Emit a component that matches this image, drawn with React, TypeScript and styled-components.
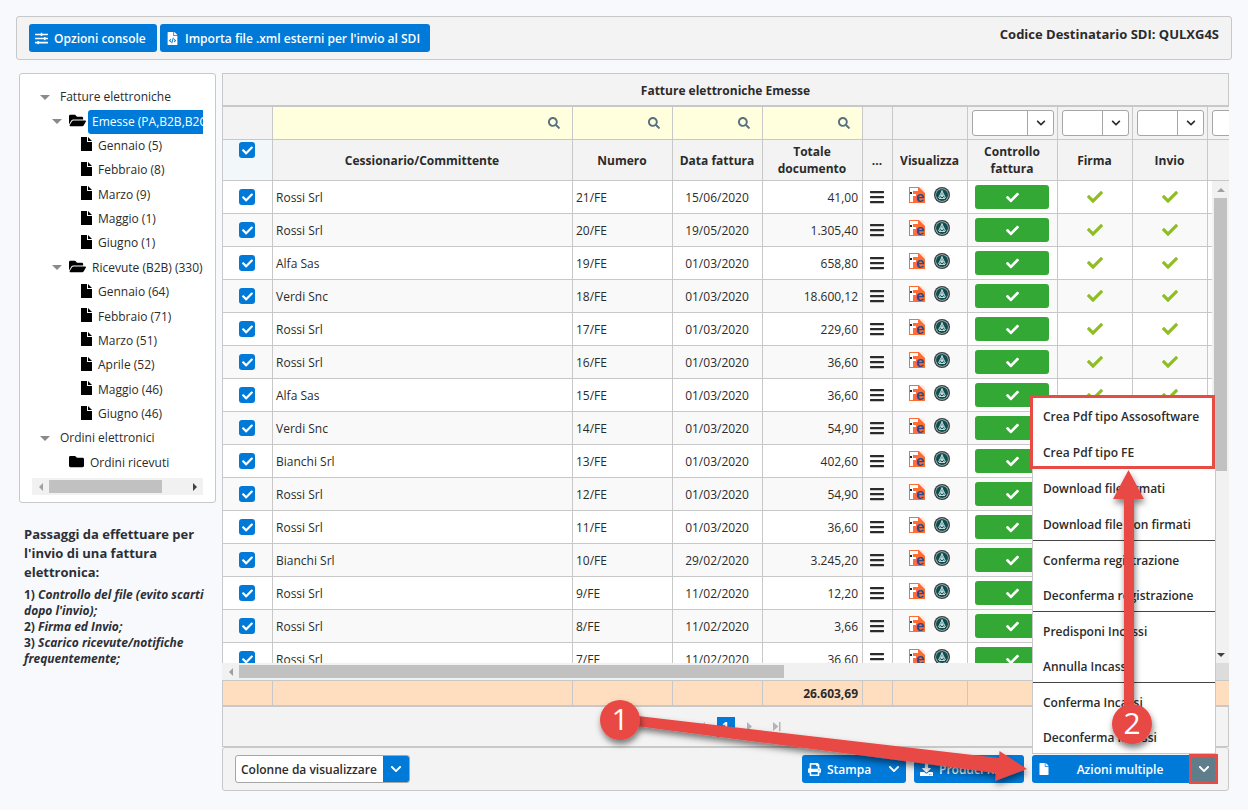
import React from "react";
import styled, { createGlobalStyle, css } from "styled-components";
import {
  FaBars,
  FaCheck,
  FaChevronDown,
  FaDownload,
  FaFile,
  FaFileCode,
  FaFolder,
  FaFolderOpen,
  FaPrint,
  FaSearch,
  FaSlidersH,
} from "react-icons/fa";

const color = {
  page: "#f8f9fc",
  panel: "#f3f3f3",
  line: "#c8c8c8",
  text: "#2b2b2b",
  blue: "#007ad9",
  green: "#34a835",
  lime: "#8fbe22",
  filter: "#ffffdd",
  total: "#ffdec0",
  red: "#e84a44",
  track: "#f1f1f1",
  thumb: "#c1c1c1",
};

const Global = createGlobalStyle`
  *, *::before, *::after { box-sizing: border-box; }
  body {
    margin: 0;
    background: ${color.page};
    color: ${color.text};
    font-family: "Open Sans", "Noto Sans", sans-serif;
    font-size: 12px;
  }
  button, input, select { font: inherit; color: inherit; margin: 0; }
  svg { display: block; flex: none; }
`;

/* ---------- page frame ---------- */

const Page = styled.div`
  position: relative;
  padding: 16px 16px 19px;
  overflow: hidden;
`;

const TopBar = styled.header`
  display: flex;
  align-items: flex-start;
  justify-content: space-between;
  padding: 7px 12px;
  border: 1px solid ${color.line};
  border-radius: 3px;
  background: ${color.panel};
`;

const ButtonRow = styled.div<{ $gap: number }>`
  display: flex;
  gap: ${(p) => p.$gap}px;
`;

const BlueButton = styled.button<{ $width?: number; $iconGap?: number; $flatRight?: boolean }>`
  display: flex;
  align-items: center;
  gap: ${(p) => p.$iconGap ?? 6}px;
  height: 28px;
  width: ${(p) => (p.$width ? `${p.$width}px` : "auto")};
  padding: 0 6px;
  border: 0;
  border-radius: ${(p) => (p.$flatRight ? "3px 0 0 3px" : "3px")};
  background: ${color.blue};
  color: #fff;
  font-weight: 600;
  white-space: nowrap;
`;

const ButtonText = styled.span<{ $center?: boolean }>`
  ${(p) => p.$center && css`flex: 1; text-align: center;`}
`;

const Recipient = styled.div`
  font-size: 13px;
  font-weight: 700;
  line-height: 20px;
`;

const Main = styled.main`
  display: grid;
  grid-template-columns: 197px minmax(0, 1fr);
  gap: 6px;
  margin: 13px 3px 0;
`;

/* ---------- tree ---------- */

const TreePanel = styled.nav`
  padding: 11px 12px 7px;
  border: 1px solid ${color.line};
  border-radius: 3px;
  background: #fff;
`;

const Tree = styled.ul`
  display: flex;
  flex-direction: column;
  height: 390px;
  margin: 0 0 3px;
  padding: 0;
  list-style: none;
  overflow: hidden;
`;

const TreeNode = styled.li<{ $indent: number; $gap: number }>`
  display: flex;
  flex: 1;
  align-items: center;
  gap: ${(p) => p.$gap}px;
  padding-left: ${(p) => p.$indent}px;
  font-size: 12px;
  line-height: 24px;
  white-space: nowrap;
`;

const Caret = styled.span`
  border: 5px solid transparent;
  border-top-color: #8a8a8a;
  border-bottom-width: 0;
`;

const NodeIcon = styled.span`
  display: flex;
  padding-bottom: 3px;
  color: #000;
`;

const NodeLabel = styled.a<{ $selected?: boolean; $folder?: boolean }>`
  color: inherit;
  text-decoration: none;
  ${(p) => p.$folder && css`margin-left: -5px; padding: 0 4px;`}
  ${(p) => p.$selected && css`border-radius: 3px; background: ${color.blue}; color: #fff;`}
`;

const ScrollX = styled.div`
  display: flex;
  align-items: center;
  flex: 1;
  height: 17px;
  background: ${color.track};
`;

const ScrollY = styled.div`
  display: flex;
  flex-direction: column;
  align-items: center;
  width: 17px;
  background: ${color.track};
`;

const ScrollCap = styled.span`
  display: flex;
  flex: none;
  align-items: center;
  justify-content: center;
  width: 17px;
  height: 17px;
`;

const ThumbX = styled.span<{ $share: number }>`
  flex: ${(p) => p.$share} 1 0;
  height: 13px;
  background: ${color.thumb};
`;

const ThumbY = styled.span<{ $share: number }>`
  flex: ${(p) => p.$share} 1 0;
  width: 13px;
  background: ${color.thumb};
`;

const ScrollRest = styled.span<{ $share: number }>`
  flex: ${(p) => p.$share} 1 0;
`;

/* ---------- notes ---------- */

const Notes = styled.section`
  padding: 22px 0 0 5px;
  font-weight: 700;
  color: #2c3036;
`;

const NotesTitle = styled.h2`
  margin: 0 0 5px;
  font-size: 13px;
  line-height: 19px;
`;

const Note = styled.p`
  margin: 0;
  font-size: 12px;
  line-height: 16px;
`;

/* ---------- grid ---------- */

const TableTitle = styled.h1`
  margin: 0;
  height: 34px;
  border: 1px solid ${color.line};
  border-bottom-width: 2px;
  background: ${color.panel};
  font-size: 12px;
  line-height: 34px;
  text-align: center;
`;

const Clip = styled.div`
  flex: 1;
  min-width: 0;
  overflow: hidden;
  border-left: 1px solid ${color.line};
`;

const BodyArea = styled.div`
  display: flex;
  height: 482px;
`;

const ScrollLine = styled.div`
  display: flex;
`;

const Corner = styled.div`
  width: 17px;
  height: 17px;
  background: #dcdcdc;
`;

const GridTable = styled.table`
  width: 1065px;
  table-layout: fixed;
  border-collapse: separate;
  border-spacing: 0;
`;

const cell = css`
  padding: 0 4px 0 3px;
  border-right: 1px solid ${color.line};
  border-bottom: 1px solid ${color.line};
`;

const FilterCell = styled.td<{ $editable?: boolean }>`
  ${cell}
  height: 33px;
  padding: 0 3px 0 4px;
  background: ${(p) => (p.$editable ? color.filter : color.panel)};
`;

const HeadCell = styled.th<{ $check?: boolean }>`
  ${cell}
  height: 41px;
  background: ${(p) => (p.$check ? "#f2f7f9" : color.panel)};
  vertical-align: ${(p) => (p.$check ? "top" : "middle")};
  padding-top: ${(p) => (p.$check ? 2 : 0)}px;
  font-weight: 700;
  line-height: 17px;
`;

const BodyRow = styled.tr`
  background: #fff;
  &:nth-child(even) { background: #f9f9f9; }
`;

const BodyCell = styled.td<{ $align?: "left" | "center" | "right" }>`
  ${cell}
  height: 33px;
  text-align: ${(p) => p.$align ?? "left"};
`;

const TotalCell = styled.td`
  ${cell}
  height: 25px;
  border-top: 1px solid ${color.line};
  border-bottom: 0;
  background: ${color.total};
  font-weight: 700;
  text-align: right;
`;

const Centered = styled.div<{ $gap?: number; $lift?: boolean }>`
  display: flex;
  align-items: center;
  justify-content: center;
  gap: ${(p) => p.$gap ?? 0}px;
  padding-bottom: ${(p) => (p.$lift ? 4 : 0)}px;
`;

const FilterBox = styled.label`
  display: flex;
  align-items: center;
  padding-right: 9px;
  color: #55707f;
`;

const FilterInput = styled.input`
  flex: 1;
  min-width: 0;
  height: 26px;
  border: 0;
  background: transparent;
`;

const SelectBox = styled.span`
  display: grid;
  grid-template-columns: 1fr 26px;
  height: 26px;
  border: 1px solid #a6a6a6;
  border-radius: 3px;
  background: #fff;
  overflow: hidden;
`;

const SelectField = styled.select`
  grid-area: 1 / 1 / 2 / 3;
  width: 100%;
  height: 100%;
  border: 0;
  background: transparent;
  appearance: none;
`;

const SelectArrow = styled.span`
  grid-area: 1 / 2;
  display: flex;
  align-items: center;
  justify-content: center;
  border-left: 1px solid #a6a6a6;
  pointer-events: none;
`;

const CheckWrap = styled.label`
  display: grid;
  place-items: center;
  width: 16px;
  height: 16px;
  margin: 0 auto;
  color: #fff;
  & > * { grid-area: 1 / 1; }
  & > svg { pointer-events: none; }
`;

const CheckInput = styled.input`
  appearance: none;
  width: 16px;
  height: 16px;
  border-radius: 3px;
  background: ${color.blue};
`;

const GreenButton = styled.button`
  display: flex;
  align-items: center;
  justify-content: center;
  width: 74px;
  height: 24px;
  border: 0;
  border-radius: 3px;
  background: ${color.green};
  color: #fff;
`;

const PlainButton = styled.button`
  display: flex;
  padding: 0;
  border: 0;
  background: none;
`;

const Pager = styled.div`
  display: flex;
  align-items: center;
  justify-content: center;
  gap: 3px;
  height: 42px;
  border: 1px solid ${color.line};
  border-top-width: 2px;
  background: ${color.panel};
`;

const PagerButton = styled.button<{ $current?: boolean }>`
  display: flex;
  align-items: center;
  justify-content: center;
  width: ${(p) => (p.$current ? 18 : 24)}px;
  height: 20px;
  padding: 0;
  border: 0;
  background: ${(p) => (p.$current ? color.blue : "none")};
  color: ${(p) => (p.$current ? "#fff" : "#b4b4b4")};
  font-weight: 700;
`;

const Toolbar = styled.footer`
  display: flex;
  justify-content: space-between;
  padding: 7px 11px 7px 12px;
  border: 1px solid ${color.line};
  border-radius: 3px;
  background: ${color.panel};
`;

const ColumnPicker = styled.span`
  display: grid;
  grid-template-columns: 1fr 26px;
  width: 175px;
  height: 28px;
  border: 1px solid #a6a6a6;
  border-radius: 3px;
  background: #fff;
  overflow: hidden;
`;

const ColumnSelect = styled(SelectField)`
  padding: 0 0 0 5px;
  font-weight: 600;
`;

const BlueArrow = styled(SelectArrow)`
  border: 0;
  background: ${color.blue};
  color: #fff;
`;

const MenuAnchor = styled.div`
  position: relative;
  display: flex;
`;

const OpenedToggle = styled.button`
  display: flex;
  align-items: center;
  justify-content: center;
  width: 27px;
  height: 28px;
  padding: 0;
  border: 0;
  background: #607d8b;
  color: #fff;
  outline: 3px solid ${color.red};
  outline-offset: -2px;
`;

const Popup = styled.div`
  position: absolute;
  right: 1px;
  bottom: 29px;
  width: 184px;
  border: 1px solid ${color.line};
  background: #fff;
`;

const MenuGroup = styled.div<{ $first?: boolean }>`
  display: grid;
  gap: ${(p) => (p.$first ? 1 : 0)}px;
  border-top: ${(p) => (p.$first ? "0" : "1px solid #444")};
`;

const MenuItem = styled.button`
  height: 35px;
  padding: 10px 0 5px 10px;
  border: 0;
  background: none;
  font-size: 12px;
  font-weight: 600;
  line-height: 20px;
  text-align: left;
  white-space: nowrap;
`;

const Highlight = styled.div`
  position: absolute;
  inset: -2px 0 auto -3px;
  height: 74px;
  border: 3px solid ${color.red};
  pointer-events: none;
`;

const Callouts = styled.svg`
  position: absolute;
  top: 0;
  right: 0;
  pointer-events: none;
`;

/* ---------- small drawings ---------- */

type Dir = "left" | "right" | "up" | "down";

const arrowPoints: Record<Dir, string> = {
  left: "6,0 2,4 6,8",
  right: "2,0 6,4 2,8",
  up: "0,6 4,2 8,6",
  down: "0,2 4,6 8,2",
};

function Arrow({ dir, dark }: { dir: Dir; dark?: boolean }) {
  return (
    <ScrollCap>
      <svg width="8" height="8" aria-hidden="true">
        <polygon points={arrowPoints[dir]} fill={dark ? "#404040" : "#a0a0a0"} />
      </svg>
    </ScrollCap>
  );
}

const LogoSvg = styled.svg`
  overflow: visible;
`;

function FeLogo() {
  return (
    <LogoSvg width="16" height="16" viewBox="0 0 16 16" aria-hidden="true">
      <path d="M0 0h10l6 6v10H0z" fill="#ff6d33" />
      <path d="M11 0l5 5V3l-3-3z" fill="#ffe3d6" />
      <rect x="1" y="1" width="8" height="3" fill="#fff" />
      <rect x="1" y="4" width="3" height="11" fill="#fff" />
      <rect x="4" y="7" width="3" height="2" fill="#fff" />
      <rect x="1" y="5" width="2" height="2" fill="#222" />
      <text x="7" y="15" fontFamily="Liberation Sans, sans-serif" fontSize="15" fontWeight="700" fill="#2d4b8e">
        e
      </text>
    </LogoSvg>
  );
}

function AssoLogo() {
  return (
    <svg width="16" height="16" viewBox="0 0 16 16" aria-hidden="true">
      <circle cx="8" cy="8" r="8" fill="#3c3c3c" />
      <circle cx="8" cy="8" r="6.700" fill="#a9c4c3" />
      <circle cx="8" cy="8" r="6" fill="#0d4f50" />
      <path
        d="M8 3v3.500M8 4L4.500 11M8 4l3.500 7M6.500 8.500L8 6.500l1.500 2zM5 11.500L8 9l3 2.500z"
        fill="none"
        stroke="#c4d8d7"
        strokeWidth="1"
      />
    </svg>
  );
}

function PagerGlyph({ flip, end }: { flip?: boolean; end?: boolean }) {
  return (
    <svg width="8" height="9" viewBox="0 0 8 9" aria-hidden="true" transform={flip ? "rotate(180)" : undefined}>
      <path d={end ? "M0 0l5.500 4.500L0 9z M6 0h1.500v9H6z" : "M1 0l5 4.500L1 9z"} fill="currentColor" />
    </svg>
  );
}

function Check({ label }: { label: string }) {
  return (
    <CheckWrap>
      <CheckInput type="checkbox" defaultChecked aria-label={label} />
      <FaCheck size={11} />
    </CheckWrap>
  );
}

/* ---------- data ---------- */

type Node = { kind: "root" | "open" | "file" | "closed"; label: string; selected?: boolean };

const nodes: Node[] = [
  { kind: "root", label: "Fatture elettroniche" },
  { kind: "open", label: "Emesse (PA,B2B,B2C)", selected: true },
  { kind: "file", label: "Gennaio (5)" },
  { kind: "file", label: "Febbraio (8)" },
  { kind: "file", label: "Marzo (9)" },
  { kind: "file", label: "Maggio (1)" },
  { kind: "file", label: "Giugno (1)" },
  { kind: "open", label: "Ricevute (B2B) (330)" },
  { kind: "file", label: "Gennaio (64)" },
  { kind: "file", label: "Febbraio (71)" },
  { kind: "file", label: "Marzo (51)" },
  { kind: "file", label: "Aprile (52)" },
  { kind: "file", label: "Maggio (46)" },
  { kind: "file", label: "Giugno (46)" },
  { kind: "root", label: "Ordini elettronici" },
  { kind: "closed", label: "Ordini ricevuti" },
];

const nodeIndent = { root: 8, open: 20, file: 49, closed: 37 };
const nodeGap = { root: 10, open: 7, file: 6, closed: 6 };

const invoices: [string, string, string, string][] = [
  ["Rossi Srl", "21/FE", "15/06/2020", "41,00"],
  ["Rossi Srl", "20/FE", "19/05/2020", "1.305,40"],
  ["Alfa Sas", "19/FE", "01/03/2020", "658,80"],
  ["Verdi Snc", "18/FE", "01/03/2020", "18.600,12"],
  ["Rossi Srl", "17/FE", "01/03/2020", "229,60"],
  ["Rossi Srl", "16/FE", "01/03/2020", "36,60"],
  ["Alfa Sas", "15/FE", "01/03/2020", "36,60"],
  ["Verdi Snc", "14/FE", "01/03/2020", "54,90"],
  ["Bianchi Srl", "13/FE", "01/03/2020", "402,60"],
  ["Rossi Srl", "12/FE", "01/03/2020", "54,90"],
  ["Rossi Srl", "11/FE", "01/03/2020", "36,60"],
  ["Bianchi Srl", "10/FE", "29/02/2020", "3.245,20"],
  ["Rossi Srl", "9/FE", "11/02/2020", "12,20"],
  ["Rossi Srl", "8/FE", "11/02/2020", "3,66"],
  ["Rossi Srl", "7/FE", "11/02/2020", "36,60"],
];

const columnWidths = [50, 300, 100, 90, 100, 30, 75, 90, 75, 75, 80];
const textFilters = ["Cessionario/Committente", "Numero", "Data fattura", "Totale documento"];
const selectFilters = ["Controllo fattura", "Firma", "Invio", "Ricevute"];

const menuGroups = [
  ["Crea Pdf tipo Assosoftware", "Crea Pdf tipo FE", "Download file firmati", "Download file non firmati"],
  ["Conferma registrazione", "Deconferma registrazione"],
  ["Predisponi Incassi", "Annulla Incassi"],
  ["Conferma Incassi", "Deconferma Incassi"],
];

function Columns() {
  return (
    <colgroup>
      {columnWidths.map((w, i) => (
        <col key={i} width={w} />
      ))}
    </colgroup>
  );
}

/* ---------- sections ---------- */

function Sidebar() {
  return (
    <aside>
      <TreePanel aria-label="Archivio">
        <Tree>
          {nodes.map((n, i) => (
            <TreeNode key={i} $indent={nodeIndent[n.kind]} $gap={nodeGap[n.kind]}>
              {(n.kind === "root" || n.kind === "open") && <Caret />}
              {n.kind !== "root" && (
                <NodeIcon>
                  {n.kind === "open" && <FaFolderOpen size={17} />}
                  {n.kind === "closed" && <FaFolder size={15} />}
                  {n.kind === "file" && (
                    <svg width="11" height="14" viewBox="0 0 11 14" aria-hidden="true">
                      <path d="M0 0h6v5h5v9H0z M7 0l4 4H7z" fill="currentColor" />
                    </svg>
                  )}
                </NodeIcon>
              )}
              <NodeLabel href="#" $folder={n.kind === "open"} $selected={n.selected}>
                {n.label}
              </NodeLabel>
            </TreeNode>
          ))}
        </Tree>
        <ScrollX>
          <Arrow dir="left" />
          <ThumbX $share={113} />
          <ScrollRest $share={24} />
          <Arrow dir="right" dark />
        </ScrollX>
      </TreePanel>
      <Notes>
        <NotesTitle>Passaggi da effettuare per l'invio di una fattura elettronica:</NotesTitle>
        <Note>1) <em>Controllo del file (evito scarti dopo l'invio);</em></Note>
        <Note>2) <em>Firma ed Invio;</em></Note>
        <Note>3) <em>Scarico ricevute/notifiche frequentemente;</em></Note>
      </Notes>
    </aside>
  );
}

function GridHead() {
  return (
    <Clip>
      <GridTable>
        <Columns />
        <thead>
          <tr>
            <FilterCell />
            {textFilters.map((f) => (
              <FilterCell key={f} $editable>
                <FilterBox>
                  <FilterInput type="text" aria-label={`Filtra ${f}`} />
                  <FaSearch size={12} />
                </FilterBox>
              </FilterCell>
            ))}
            <FilterCell />
            <FilterCell />
            {selectFilters.map((f) => (
              <FilterCell key={f}>
                <SelectBox>
                  <SelectField aria-label={`Filtra ${f}`} />
                  <SelectArrow><FaChevronDown size={10} /></SelectArrow>
                </SelectBox>
              </FilterCell>
            ))}
          </tr>
          <tr>
            <HeadCell $check><Check label="Seleziona tutto" /></HeadCell>
            <HeadCell>Cessionario/Committente</HeadCell>
            <HeadCell>Numero</HeadCell>
            <HeadCell>Data fattura</HeadCell>
            <HeadCell>Totale documento</HeadCell>
            <HeadCell>...</HeadCell>
            <HeadCell>Visualizza</HeadCell>
            <HeadCell>Controllo fattura</HeadCell>
            <HeadCell>Firma</HeadCell>
            <HeadCell>Invio</HeadCell>
            <HeadCell />
          </tr>
        </thead>
      </GridTable>
    </Clip>
  );
}

function GridBody() {
  return (
    <>
      <BodyArea>
        <Clip>
          <GridTable>
            <Columns />
            <tbody>
              {invoices.map(([customer, number, date, total]) => (
                <BodyRow key={number}>
                  <BodyCell><Check label={`Seleziona ${number}`} /></BodyCell>
                  <BodyCell>{customer}</BodyCell>
                  <BodyCell>{number}</BodyCell>
                  <BodyCell $align="center">{date}</BodyCell>
                  <BodyCell $align="right">{total}</BodyCell>
                  <BodyCell>
                    <Centered><PlainButton aria-label="Azioni"><FaBars size={16} /></PlainButton></Centered>
                  </BodyCell>
                  <BodyCell>
                    <Centered $gap={9} $lift>
                      <PlainButton aria-label="Visualizza FE"><FeLogo /></PlainButton>
                      <PlainButton aria-label="Visualizza Assosoftware"><AssoLogo /></PlainButton>
                    </Centered>
                  </BodyCell>
                  <BodyCell>
                    <Centered><GreenButton aria-label="Controllata"><FaCheck size={13} /></GreenButton></Centered>
                  </BodyCell>
                  <BodyCell><Centered><FaCheck size={16} color={color.lime} /></Centered></BodyCell>
                  <BodyCell><Centered><FaCheck size={16} color={color.lime} /></Centered></BodyCell>
                  <BodyCell />
                </BodyRow>
              ))}
            </tbody>
          </GridTable>
        </Clip>
        <ScrollY>
          <Arrow dir="up" />
          <ThumbY $share={273} />
          <ScrollRest $share={175} />
          <Arrow dir="down" dark />
        </ScrollY>
      </BodyArea>
      <ScrollLine>
        <ScrollX>
          <Arrow dir="left" />
          <ThumbX $share={545} />
          <ScrollRest $share={411} />
          <Arrow dir="right" dark />
        </ScrollX>
        <Corner />
      </ScrollLine>
      <Clip>
        <GridTable>
          <Columns />
          <tbody>
            <tr>
              {columnWidths.map((_, i) => (
                <TotalCell key={i}>{i === 4 ? "26.603,69" : null}</TotalCell>
              ))}
            </tr>
          </tbody>
        </GridTable>
      </Clip>
    </>
  );
}

const Spacer = styled.span`
  flex: 1;
`;

function BottomBar() {
  return (
    <Toolbar>
      <ColumnPicker>
        <ColumnSelect aria-label="Colonne da visualizzare">
          <option>Colonne da visualizzare</option>
        </ColumnSelect>
        <BlueArrow><FaChevronDown size={12} /></BlueArrow>
      </ColumnPicker>
      <ButtonRow $gap={8}>
        <BlueButton $width={104}>
          <FaPrint size={13} />
          <ButtonText>Stampa</ButtonText>
          <Spacer />
          <FaChevronDown size={12} />
        </BlueButton>
        <BlueButton $width={110}>
          <FaDownload size={13} />
          <ButtonText>Produci RiBa</ButtonText>
        </BlueButton>
        <MenuAnchor>
          <BlueButton $width={158} $flatRight>
            <FaFile size={12} />
            <ButtonText $center>Azioni multiple</ButtonText>
          </BlueButton>
          <OpenedToggle aria-label="Apri menu" aria-expanded="true">
            <FaChevronDown size={12} />
          </OpenedToggle>
          <Popup role="menu">
            {menuGroups.map((group, i) => (
              <MenuGroup key={i} $first={i === 0}>
                {group.map((label) => (
                  <MenuItem key={label} role="menuitem">{label}</MenuItem>
                ))}
              </MenuGroup>
            ))}
            <Highlight />
          </Popup>
        </MenuAnchor>
      </ButtonRow>
    </Toolbar>
  );
}

function Guide() {
  return (
    <Callouts width="1248" height="810" viewBox="0 0 1248 810" aria-hidden="true">
      <defs>
        <filter id="lift" x="-20%" y="-40%" width="140%" height="200%">
          <feDropShadow dx="1" dy="4" stdDeviation="3" floodColor="#000" floodOpacity="0.5" />
        </filter>
      </defs>
      <g fill={color.red} filter="url(#lift)">
        <path d="M638 716L999 758L999.500 751L1027 769L995 781L996 773L636 726z" />
        <path d="M1124 730V499H1113L1128.500 470L1144 499H1134V730z" />
      </g>
      <g filter="url(#lift)" fill={color.red}>
        <circle cx="620" cy="720" r="20" />
        <circle cx="1132" cy="724" r="20" />
      </g>
      <g fill="#fff" fontFamily="Open Sans, sans-serif" fontSize="30" fontWeight="500" textAnchor="middle">
        <text x="620" y="730">1</text>
        <text x="1132" y="734">2</text>
      </g>
    </Callouts>
  );
}

export default function App() {
  return (
    <Page>
      <Global />
      <TopBar>
        <ButtonRow $gap={3}>
          <BlueButton $width={128}>
            <FaSlidersH size={13} />
            <ButtonText>Opzioni console</ButtonText>
          </BlueButton>
          <BlueButton $width={270} $iconGap={6}>
            <FaFileCode size={13} />
            <ButtonText>Importa file .xml esterni per l'invio al SDI</ButtonText>
          </BlueButton>
        </ButtonRow>
        <Recipient>Codice Destinatario SDI: QULXG4S</Recipient>
      </TopBar>
      <Main>
        <Sidebar />
        <section>
          <TableTitle>Fatture elettroniche Emesse</TableTitle>
          <GridHead />
          <GridBody />
          <Pager>
            <PagerButton aria-label="Prima pagina"><PagerGlyph flip end /></PagerButton>
            <PagerButton aria-label="Pagina precedente"><PagerGlyph flip /></PagerButton>
            <PagerButton $current>1</PagerButton>
            <PagerButton aria-label="Pagina successiva"><PagerGlyph /></PagerButton>
            <PagerButton aria-label="Ultima pagina"><PagerGlyph end /></PagerButton>
          </Pager>
          <BottomBar />
        </section>
      </Main>
      <Guide />
    </Page>
  );
}
